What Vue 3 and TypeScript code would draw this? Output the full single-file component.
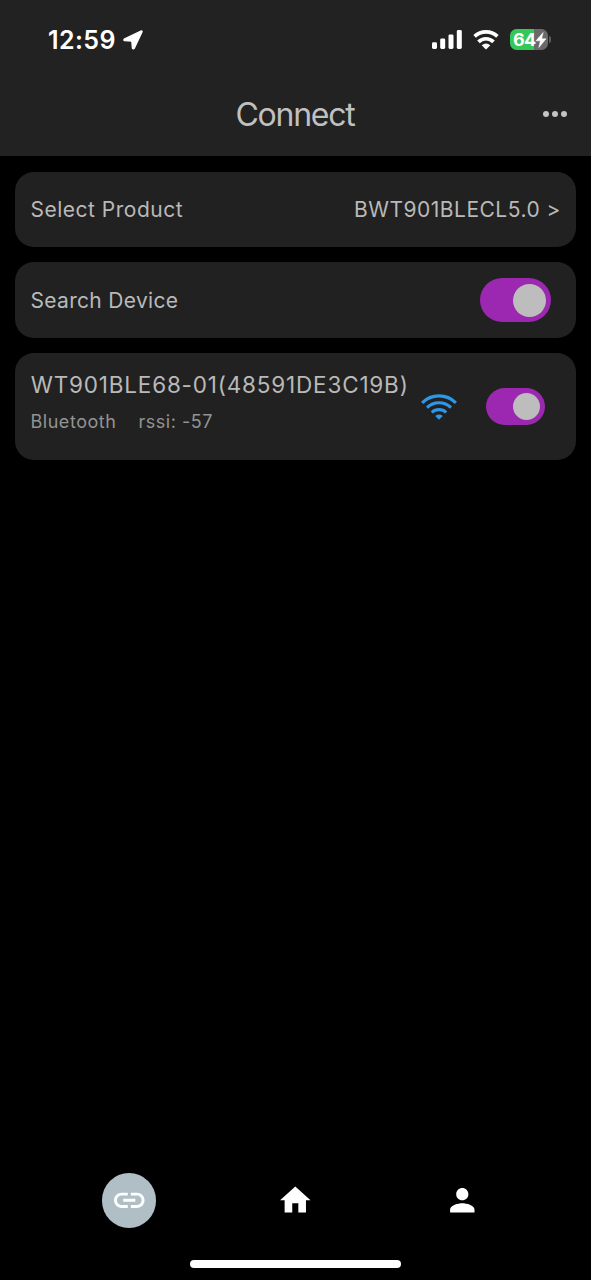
<script setup lang="ts">
import { ref } from 'vue'

const product = ref('BWT901BLECL5.0')
const searching = ref(true)
const device = ref({ name: 'WT901BLE68-01(48591DE3C19B)', link: 'Bluetooth', rssi: -57, on: true })
</script>

<template>
  <div class="screen">
    <header class="header">
      <div class="status">
        <div class="status-left">
          <span class="time">12:59</span>
          <svg class="location" width="20" height="20" viewBox="0 0 20 20">
            <path d="M18.4 .9 L1.2 9 Q0.4 10.2 1.6 10.7 L8.8 11 L9.4 18.2 Q10.2 19.6 11.2 18.4 L19.1 1.8 Q19.2 0.7 18.4 .9Z" fill="#fff" stroke="#fff" stroke-width="1.3" stroke-linejoin="round" />
          </svg>
        </div>
        <div class="status-right">
          <svg width="30" height="20" viewBox="0 0 30 20" fill="#fff">
            <rect x="0" y="12.2" width="5" height="6.8" rx="1.4" />
            <rect x="8.2" y="8.4" width="5" height="10.6" rx="1.4" />
            <rect x="16.5" y="4.4" width="5" height="14.6" rx="1.4" />
            <rect x="24.8" y="0" width="5" height="19" rx="1.4" />
          </svg>
          <svg class="status-wifi" width="26" height="20" viewBox="0 0 26 20">
            <g fill="none" stroke="#fff" stroke-width="3.7">
              <path d="M1.6 6.4 A16.7 16.7 0 0 1 24.4 6.4" />
              <path d="M5.5 11.8 A10.8 10.8 0 0 1 20.5 11.8" />
            </g>
            <path d="M8.7 15.2 Q13 11.8 17.3 15.2 L13.6 19 Q13 19.6 12.4 19Z" fill="#fff" />
          </svg>
          <div class="battery">
            <span class="percent">64</span>
            <svg class="bolt" width="12" height="16" viewBox="0 0 10 15">
              <path d="M7 .5 L.3 8.3 H4.4 L3 14.5 L9.7 6.4 H5.6Z" fill="#fff" stroke="#fff" stroke-width=".5" />
            </svg>
          </div>
          <i class="battery-cap"></i>
        </div>
      </div>
      <div class="titlebar">
        <h1 class="title">Connect</h1>
        <div class="more"><i></i><i></i><i></i></div>
      </div>
    </header>

    <main class="list">
      <section class="card">
        <span class="label">Select Product</span>
        <span class="value">{{ product }} &gt;</span>
      </section>
      <section class="card">
        <span class="label search-label">Search Device</span>
        <button class="switch" :class="{ on: searching }" @click="searching = !searching"><i></i></button>
      </section>
      <section class="card device">
        <div class="info">
          <div class="name">{{ device.name }}</div>
          <div class="meta"><span>{{ device.link }}</span><span class="rssi">rssi: {{ device.rssi }}</span></div>
        </div>
        <svg class="signal" width="36" height="28" viewBox="0 0 36 28">
          <g fill="none" stroke="#2d97e8" stroke-width="3.1">
            <path d="M1.1 9.8 A24 24 0 0 1 34.9 9.8" />
            <path d="M6 14.7 A17 17 0 0 1 30 14.7" />
            <path d="M10.8 19.5 A10.4 10.4 0 0 1 25.2 19.5" />
          </g>
          <path d="M14.2 22.9 Q18 20.1 21.8 22.9 L18 26.7Z" fill="#2d97e8" />
        </svg>
        <button class="switch small" :class="{ on: device.on }" @click="device.on = !device.on"><i></i></button>
      </section>
    </main>

    <nav class="tabs">
      <div class="tab">
        <div class="active">
          <svg class="icon" viewBox="0 0 24 24"><path d="M3.9 12c0-1.71 1.39-3.1 3.1-3.1h4V7H7c-2.76 0-5 2.24-5 5s2.24 5 5 5h4v-1.9H7c-1.71 0-3.1-1.39-3.1-3.1zM8 13h8v-2H8v2zm9-6h-4v1.9h4c1.71 0 3.1 1.39 3.1 3.1s-1.39 3.1-3.1 3.1h-4V17h4c2.76 0 5-2.24 5-5s-2.24-5-5-5z" /></svg>
        </div>
      </div>
      <div class="tab"><svg class="icon" viewBox="0 0 24 24"><path d="M10 20v-6h4v6h5v-8h3L12 3 2 12h3v8z" /></svg></div>
      <div class="tab"><svg class="icon" viewBox="0 0 24 24"><path d="M12 12c2.21 0 4-1.79 4-4s-1.79-4-4-4-4 1.79-4 4 1.79 4 4 4zm0 2c-2.67 0-8 1.34-8 4v2h16v-2c0-2.66-5.33-4-8-4z" /></svg></div>
    </nav>
    <div class="home-indicator"></div>
  </div>
</template>

<style>
body {
  margin: 0;
  background: #000;
}
</style>

<style scoped>
.screen {
  width: 591px;
  height: 1280px;
  display: flex;
  flex-direction: column;
  background: #000;
  color: #b9b9b9;
  font-family: Inter, "Liberation Sans", sans-serif;
  overflow: hidden;
}
svg {
  display: block;
  flex: none;
}
.header {
  height: 156px;
  background: #222;
  flex: none;
}
.status {
  height: 78px;
  display: flex;
  justify-content: space-between;
  padding: 0 40px 0 48px;
}
.status-left,
.status-right {
  display: flex;
  align-items: center;
  height: 79px;
}
.time {
  color: #fff;
  font-size: 25px;
  font-weight: 600;
  letter-spacing: 0.4px;
}
.location {
  margin-left: 7px;
}
.status-wifi {
  margin: 0 11px;
}
.battery {
  width: 38px;
  height: 21px;
  border-radius: 6.5px;
  background: linear-gradient(90deg, #34c759 0 24.5px, #6a6a6c 24.5px);
  display: flex;
  align-items: center;
  padding-left: 3px;
  box-sizing: border-box;
}
.percent {
  color: #fff;
  font-size: 18px;
  font-weight: 700;
  letter-spacing: -0.8px;
  width: 22px;
}
.battery-cap {
  width: 2px;
  height: 7px;
  margin-left: 1px;
  border-radius: 0 2px 2px 0;
  background: #5a5a5c;
}
.titlebar {
  height: 72px;
  display: grid;
  grid-template-columns: 1fr auto 1fr;
  align-items: center;
}
.title {
  grid-column: 2;
  margin: 0;
  padding-right: 1px;
  font-size: 32px;
  font-weight: 400;
  letter-spacing: -1.25px;
  color: #c0c0c0;
}
.more {
  justify-self: end;
  display: flex;
  gap: 3.2px;
  margin-right: 24px;
}
.more i {
  width: 6px;
  height: 6px;
  border-radius: 50%;
  background: #c3c3c3;
}
.list {
  flex: 1;
  display: flex;
  flex-direction: column;
  gap: 15px;
  padding: 15.5px 15px;
}
.card {
  height: 75.8px;
  box-sizing: border-box;
  border-radius: 19px;
  background: #212121;
  display: flex;
  align-items: center;
  justify-content: space-between;
  padding: 0 15px;
  font-size: 21px;
  font-weight: 400;
  white-space: nowrap;
}
.label {
  letter-spacing: 0.5px;
  padding-left: 0.5px;
}
.search-label {
  letter-spacing: 0.32px;
}
.value {
  letter-spacing: 0.5px;
}
.switch {
  width: 71px;
  height: 44px;
  padding: 0 5.5px;
  border: 0;
  border-radius: 22px;
  background: #555;
  display: flex;
  align-items: center;
  margin-right: 10px;
  flex: none;
}
.switch.on {
  background: #9c27b0;
  justify-content: flex-end;
}
.switch i {
  width: 33px;
  height: 33px;
  border-radius: 50%;
  background: #bdbdbd;
}
.switch.small {
  width: 59.5px;
  height: 37px;
  padding: 0 4.7px;
  margin-right: 16px;
}
.switch.small i {
  width: 27.5px;
  height: 27.5px;
}
.card.device {
  height: 106.5px;
}
.info {
  width: 390.5px;
  flex: none;
  padding-bottom: 7px;
}
.name {
  font-size: 22.5px;
  line-height: 30px;
  letter-spacing: 0.81px;
  padding-left: 0.7px;
}
.meta {
  display: flex;
  margin-top: 9px;
  font-size: 18px;
  line-height: 26px;
  letter-spacing: 0.53px;
  color: #939393;
  padding-left: 0.5px;
}
.rssi {
  margin-left: 22px;
}
.signal {
  margin: 2px auto 0 0;
}
.tabs {
  height: 82px;
  margin-bottom: 0.5px;
  display: grid;
  grid-template-columns: repeat(3, 166.7px);
  justify-content: center;
  align-items: center;
  flex: none;
}
.tab {
  display: grid;
  place-items: center;
}
.active {
  width: 54.6px;
  height: 54.6px;
  border-radius: 50%;
  background: #b0bec5;
  display: grid;
  place-items: center;
}
.icon {
  width: 36.6px;
  height: 36.6px;
  fill: #fff;
}
.home-indicator {
  width: 211px;
  height: 8px;
  border-radius: 4px;
  background: #fff;
  margin: 18px auto 12px;
  flex: none;
}
</style>
